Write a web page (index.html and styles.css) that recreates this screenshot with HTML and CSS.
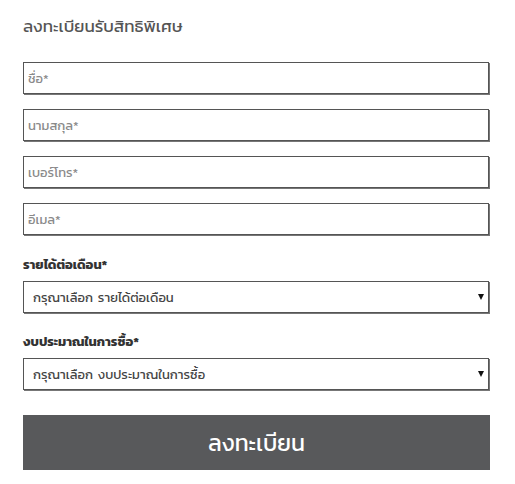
FILE: index.html
```html
<!DOCTYPE html>
<html lang="th">
<head>
<meta charset="utf-8">
<title>ลงทะเบียนรับสิทธิพิเศษ</title>
<link rel="stylesheet" href="styles.css">
</head>
<body>
<form class="reg">
  <h1 class="title">ลงทะเบียนรับสิทธิพิเศษ</h1>
  <div class="fields">
    <input class="field" type="text" placeholder="ชื่อ*">
    <input class="field" type="text" placeholder="นามสกุล*">
    <input class="field" type="text" placeholder="เบอร์โทร*">
    <input class="field" type="text" placeholder="อีเมล*">
  </div>
  <label class="label">รายได้ต่อเดือน*</label>
  <div class="select-wrap">
    <select class="select"><option>กรุณาเลือก รายได้ต่อเดือน</option></select>
    <span class="arrow"></span>
  </div>
  <label class="label label2">งบประมาณในการซื้อ*</label>
  <div class="select-wrap">
    <select class="select"><option>กรุณาเลือก งบประมาณในการซื้อ</option></select>
    <span class="arrow"></span>
  </div>
  <button class="submit" type="button">ลงทะเบียน</button>
</form>
</body>
</html>
```
FILE: styles.css
```css
html, body {
  margin: 0;
  padding: 0;
  background: #fff;
}
body {
  font-family: "Kanit", "Prompt", "Noto Sans Thai", "Noto Sans", "DejaVu Sans", sans-serif;
  color: #555;
}
.reg {
  width: 466px;
  padding: 12px 0 0 23px;
  display: flex;
  flex-direction: column;
}
.title {
  margin: 0;
  font-size: 17px;
  font-weight: 400;
  line-height: 28px;
  color: #555;
}
.fields {
  margin-top: 22px;
  display: flex;
  flex-direction: column;
  gap: 15px;
}
.field {
  box-sizing: border-box;
  width: 466px;
  height: 32px;
  margin: 0;
  padding: 0 4px;
  border: 1px solid #555;
  box-shadow: 1px 1px 0 #777;
  font-family: inherit;
  font-size: 13px;
  color: #444;
  outline: none;
}
.field::placeholder {
  color: #8a8a8a;
}
.label {
  margin-top: 16px;
  font-size: 13px;
  font-weight: 700;
  line-height: 28px;
  color: #333;
}
.label2 {
  margin-top: 15px;
}
.select-wrap {
  position: relative;
  margin-top: 2px;
  width: 466px;
}
.select {
  box-sizing: border-box;
  width: 466px;
  height: 32px;
  margin: 0;
  padding: 0 9px;
  border: 1px solid #555;
  border-radius: 0;
  box-shadow: 1px 1px 0 #777;
  background: #fff;
  appearance: none;
  -webkit-appearance: none;
  font-family: inherit;
  font-size: 13px;
  word-spacing: 2px;
  color: #444;
  outline: none;
}
.arrow {
  position: absolute;
  right: 5px;
  top: 13px;
  width: 0;
  height: 0;
  border-left: 3px solid transparent;
  border-right: 3px solid transparent;
  border-top: 6px solid #111;
}
.submit {
  margin-top: 25px;
  width: 467px;
  height: 55px;
  border: 0;
  background: #58595b;
  box-shadow: 0 2px 0 #999;
  color: #fff;
  font-family: inherit;
  font-size: 23px;
  padding: 0;
}
```
